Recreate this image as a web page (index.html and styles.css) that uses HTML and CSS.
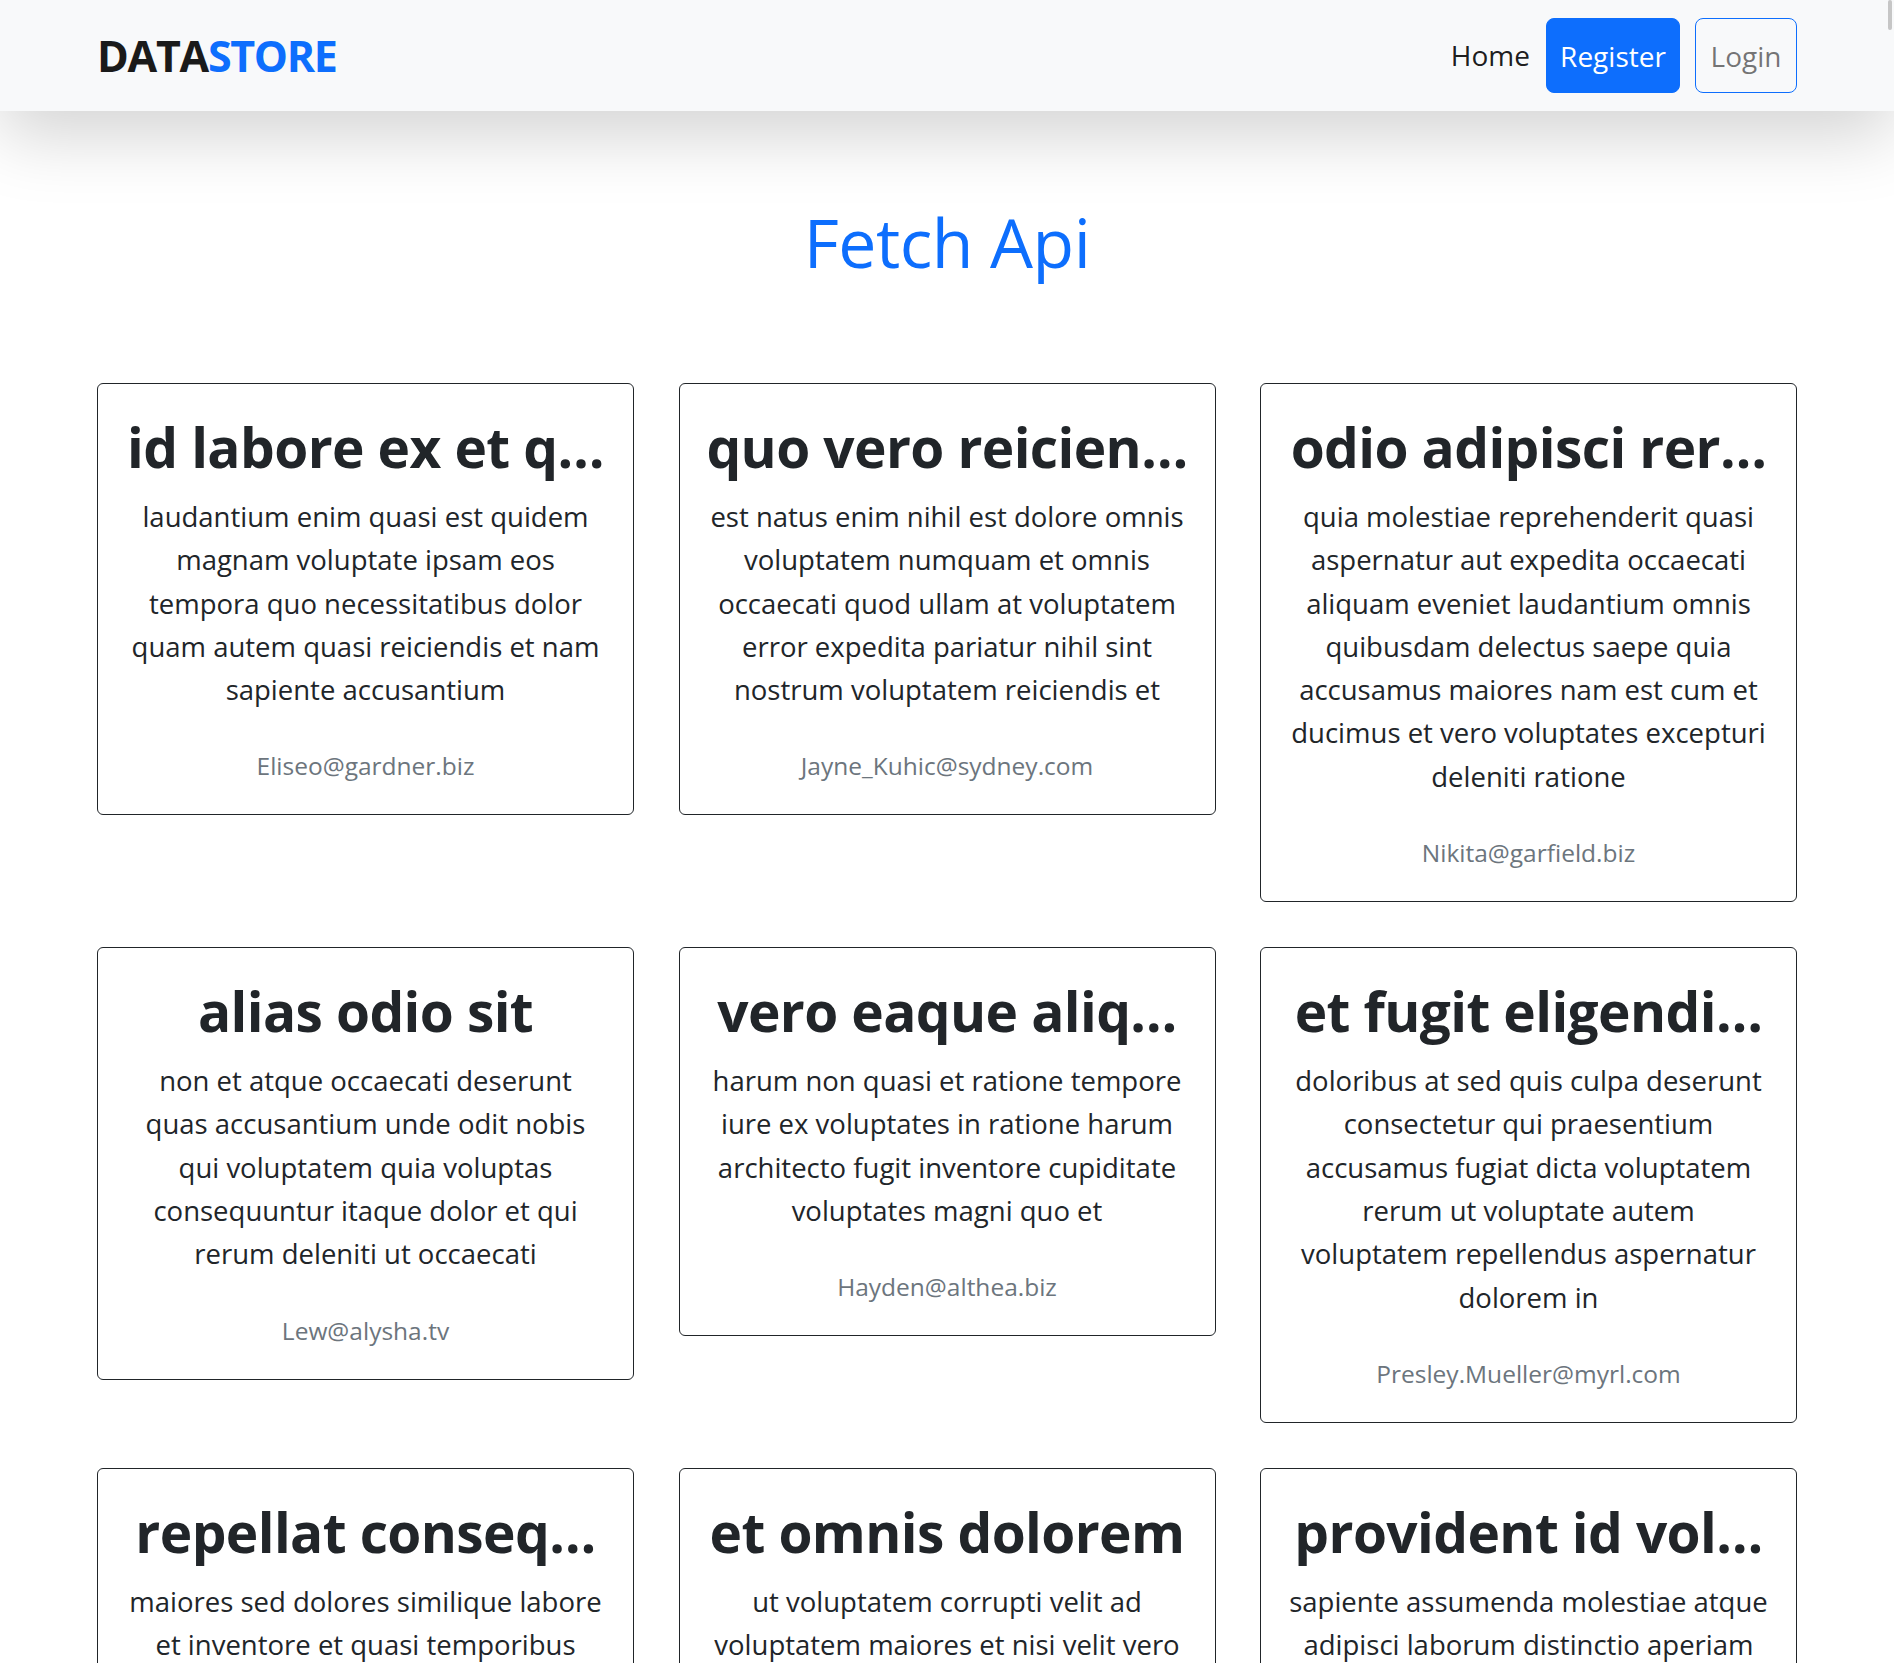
FILE: index.html
```html
<!DOCTYPE html>
<html lang="en">
<head>
<meta charset="utf-8">
<title>DataStore - Fetch Api</title>
<link rel="stylesheet" href="styles.css">
</head>
<body>
<nav class="navbar">
  <div class="nav-inner">
    <a class="brand" href="#"><span class="brand-dark">DATA</span><span class="brand-blue">STORE</span></a>
    <div class="nav-links">
      <a class="nav-home" href="#">Home</a>
      <a class="btn btn-register" href="#">Register</a>
      <a class="btn btn-login" href="#">Login</a>
    </div>
  </div>
</nav>
<div class="scroll-thumb"></div>
<main class="main">
  <h1 class="page-title">Fetch Api</h1>
  <div class="card-grid">
    <div class="card">
      <h2 class="card-title">id labore ex et q…</h2>
      <p class="card-text">laudantium enim quasi est quidem<br>magnam voluptate ipsam eos<br>tempora quo necessitatibus dolor<br>quam autem quasi reiciendis et nam<br>sapiente accusantium</p>
      <p class="card-email">Eliseo@gardner.biz</p>
    </div>
    <div class="card">
      <h2 class="card-title">quo vero reicien…</h2>
      <p class="card-text">est natus enim nihil est dolore omnis<br>voluptatem numquam et omnis<br>occaecati quod ullam at voluptatem<br>error expedita pariatur nihil sint<br>nostrum voluptatem reiciendis et</p>
      <p class="card-email">Jayne_Kuhic@sydney.com</p>
    </div>
    <div class="card">
      <h2 class="card-title">odio adipisci rer…</h2>
      <p class="card-text">quia molestiae reprehenderit quasi<br>aspernatur aut expedita occaecati<br>aliquam eveniet laudantium omnis<br>quibusdam delectus saepe quia<br>accusamus maiores nam est cum et<br>ducimus et vero voluptates excepturi<br>deleniti ratione</p>
      <p class="card-email">Nikita@garfield.biz</p>
    </div>
    <div class="card">
      <h2 class="card-title">alias odio sit</h2>
      <p class="card-text">non et atque occaecati deserunt<br>quas accusantium unde odit nobis<br>qui voluptatem quia voluptas<br>consequuntur itaque dolor et qui<br>rerum deleniti ut occaecati</p>
      <p class="card-email">Lew@alysha.tv</p>
    </div>
    <div class="card">
      <h2 class="card-title">vero eaque aliq…</h2>
      <p class="card-text">harum non quasi et ratione tempore<br>iure ex voluptates in ratione harum<br>architecto fugit inventore cupiditate<br>voluptates magni quo et</p>
      <p class="card-email">Hayden@althea.biz</p>
    </div>
    <div class="card">
      <h2 class="card-title">et fugit eligendi…</h2>
      <p class="card-text">doloribus at sed quis culpa deserunt<br>consectetur qui praesentium<br>accusamus fugiat dicta voluptatem<br>rerum ut voluptate autem<br>voluptatem repellendus aspernatur<br>dolorem in</p>
      <p class="card-email">Presley.Mueller@myrl.com</p>
    </div>
    <div class="card">
      <h2 class="card-title">repellat conseq…</h2>
      <p class="card-text">maiores sed dolores similique labore<br>et inventore et quasi temporibus<br>esse sunt id et eos voluptatem<br>aliquam aliquid ratione corporis<br>molestiae mollitia quia et magnam<br>dolor</p>
      <p class="card-email">Dallas@ole.me</p>
    </div>
    <div class="card">
      <h2 class="card-title">et omnis dolorem</h2>
      <p class="card-text">ut voluptatem corrupti velit ad<br>voluptatem maiores et nisi velit vero<br>accusamus maiores voluptates quia<br>aliquid ullam eaque</p>
      <p class="card-email">Mallory_Kunze@marie.org</p>
    </div>
    <div class="card">
      <h2 class="card-title">provident id vol…</h2>
      <p class="card-text">sapiente assumenda molestiae atque<br>adipisci laborum distinctio aperiam<br>et ab ut omnis et occaecati<br>aspernatur odit sit rem expedita<br>quas enim ipsam minus</p>
      <p class="card-email">Meghan_Littel@rene.us</p>
    </div>
  </div>
</main>
</body>
</html>
```

FILE: styles.css
```css
* {
  box-sizing: border-box;
}

body {
  margin: 0;
  font-family: "Open Sans", "Noto Sans", sans-serif;
  color: #212529;
  background: #ffffff;
}

a {
  text-decoration: none;
}

.navbar {
  position: relative;
  z-index: 1;
  height: 111px;
  background: #f8f9fa;
  box-shadow: 0 24px 70px rgba(0, 0, 0, 0.175);
}

.nav-inner {
  width: 1700px;
  height: 100%;
  margin: 0 auto;
  display: flex;
  align-items: center;
  justify-content: space-between;
}

.brand {
  display: flex;
  font-size: 43px;
  font-weight: 700;
  line-height: 1.2;
  letter-spacing: -1.3px;
}

.brand-dark {
  color: #1a1a1a;
}

.brand-blue {
  color: #0d6efd;
}

.nav-links {
  display: flex;
  align-items: center;
  gap: 15px;
}

.nav-home {
  font-size: 28px;
  color: rgba(0, 0, 0, 0.9);
  line-height: 75px;
  margin-right: 1px;
}

.btn {
  display: flex;
  align-items: center;
  justify-content: center;
  height: 75px;
  font-size: 28px;
  border-radius: 8px;
  border: 1px solid #0d6efd;
}

.btn-register {
  width: 134px;
  background: #0d6efd;
  color: #ffffff;
}

.btn-login {
  width: 102px;
  color: rgba(0, 0, 0, 0.55);
}

.scroll-thumb {
  position: absolute;
  top: 0;
  right: 2px;
  z-index: 2;
  width: 4px;
  height: 30px;
  border-radius: 2px;
  background: #c6c6c6;
}

.main {
  width: 1700px;
  margin: 0 auto;
  padding-top: 89px;
}

.page-title {
  margin: 0 0 99px;
  font-size: 68px;
  font-weight: 400;
  line-height: 84px;
  letter-spacing: -0.5px;
  text-align: center;
  color: #0d6efd;
}

.card-grid {
  display: grid;
  grid-template-columns: repeat(3, minmax(0, 1fr));
  column-gap: 44.5px;
  row-gap: 45px;
  align-items: start;
}

.card {
  border: 1px solid #212529;
  border-radius: 6px;
  padding: 24px 20px 29px;
  text-align: center;
}

.card-title {
  margin: 0 0 9px;
  font-size: 55px;
  font-weight: 700;
  line-height: 78px;
  letter-spacing: -0.6px;
  white-space: nowrap;
}

.card-text {
  margin: 0;
  font-size: 27.5px;
  line-height: 43.3px;
  white-space: nowrap;
}

.card-email {
  margin: 36px 0 0;
  font-size: 24.5px;
  line-height: 38px;
  color: #6c757d;
}
```
